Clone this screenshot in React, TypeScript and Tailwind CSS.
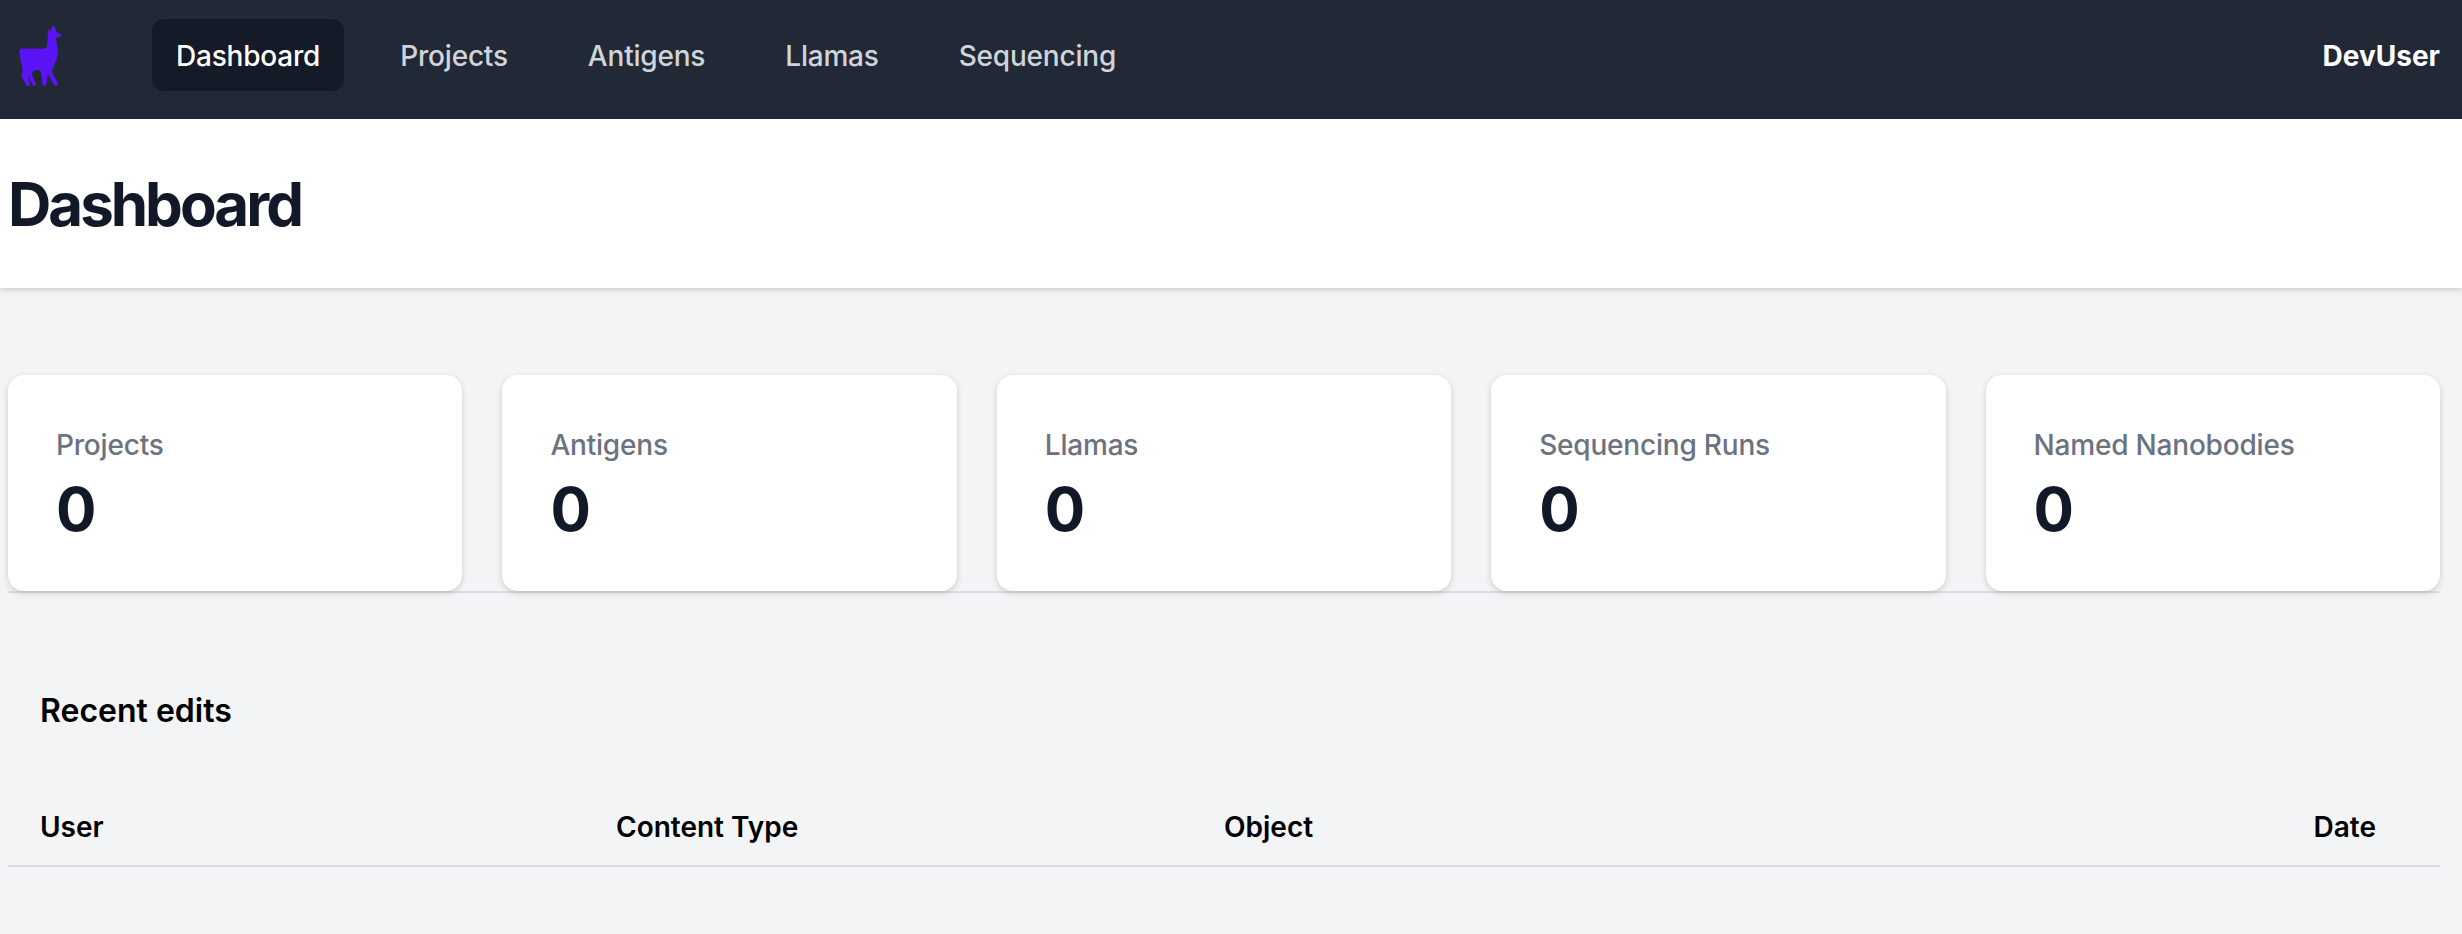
import React from 'react';

const navItems = ['Dashboard', 'Projects', 'Antigens', 'Llamas', 'Sequencing'];
const stats = ['Projects', 'Antigens', 'Llamas', 'Sequencing Runs', 'Named Nanobodies'];

function LlamaLogo() {
  return (
    <svg className="w-[44px] h-[63px] shrink-0" viewBox="54 40 132 190" fill="#5b14f5" aria-hidden="true">
      <path d="M147 55 L152 62 L156 52 L161 44 L166 52 L168 64 L176 68 L184 72 L183 78 L168 82 L171 100 L174 120 L172 140 L163 165 L155 182 L175 222 L171 226 L164 226 L143 190 L139 226 L128 226 L122 182 L110 178 L100 182 L95 190 L109 226 L99 226 L83 192 L91 226 L80 226 L63 197 L68 180 L62 150 L57 122 L62 115 L72 114 L130 115 L140 110 L143 85 L144 65 Z" />
    </svg>
  );
}

function Navbar() {
  return (
    <nav className="h-[119px] bg-[#222936] flex items-center pl-[18px] pr-[22px] pb-[9px]">
      <LlamaLogo />
      <div className="flex items-center gap-[32px] ml-[90px]">
        {navItems.map((item, index) => (
          <a
            key={item}
            className={
              index === 0
                ? 'px-[24px] pt-[17px] pb-[15px] rounded-[12px] bg-[#141a27] text-white text-[28px] leading-[40px] font-medium tracking-[-0.2px]'
                : 'px-[24px] pt-[17px] pb-[15px] rounded-[12px] text-[#d1d5db] text-[28px] leading-[40px] font-medium tracking-[-0.2px]'
            }
          >
            {item}
          </a>
        ))}
      </div>
      <span className="ml-auto pt-[2px] text-white text-[28px] leading-[40px] font-bold">DevUser</span>
    </nav>
  );
}

function StatCard({ label }: { label: string }) {
  return (
    <div className="h-[216px] bg-white rounded-[16px] px-[48px] pt-[50px] shadow-[0_2px_6px_rgba(0,0,0,0.16)]">
      <div className="text-[#6b7280] text-[28px] leading-[40px] font-medium tracking-[-0.2px]">{label}</div>
      <div className="mt-[4px] text-[#111827] text-[60px] leading-[80px] font-bold">0</div>
    </div>
  );
}

export default function App() {
  return (
    <div className="min-h-screen bg-[#f3f4f6] font-['Inter',sans-serif] overflow-hidden">
      <Navbar />
      <header className="h-[169px] bg-white flex items-center pl-[8px] shadow-[0_2px_6px_rgba(0,0,0,0.16)]">
        <h1 className="text-[60px] leading-[72px] font-bold tracking-[-3px] text-[#111827]">Dashboard</h1>
      </header>
      <main className="pl-[8px] pr-[22px] pt-[87px]">
        <div className="grid grid-cols-5 gap-[40px] border-b-2 border-[#dcdde0]">
          {stats.map((label) => (
            <StatCard key={label} label={label} />
          ))}
        </div>
        <section className="mt-[90px]">
          <h2 className="pl-[32px] text-[32px] leading-[56px] font-semibold text-black">Recent edits</h2>
          <table className="w-full mt-[68px] table-fixed text-left text-[28px] font-semibold text-black">
            <thead>
              <tr className="border-b-2 border-[#dcdde0]">
                <th className="w-[608px] pl-[32px] pb-[18px] leading-[40px] font-semibold">User</th>
                <th className="w-[608px] pb-[18px] leading-[40px] font-semibold">Content Type</th>
                <th className="pb-[18px] leading-[40px] font-semibold">Object</th>
                <th className="w-[300px] pr-[64px] pb-[18px] text-right leading-[40px] font-semibold">Date</th>
              </tr>
            </thead>
          </table>
        </section>
      </main>
    </div>
  );
}
